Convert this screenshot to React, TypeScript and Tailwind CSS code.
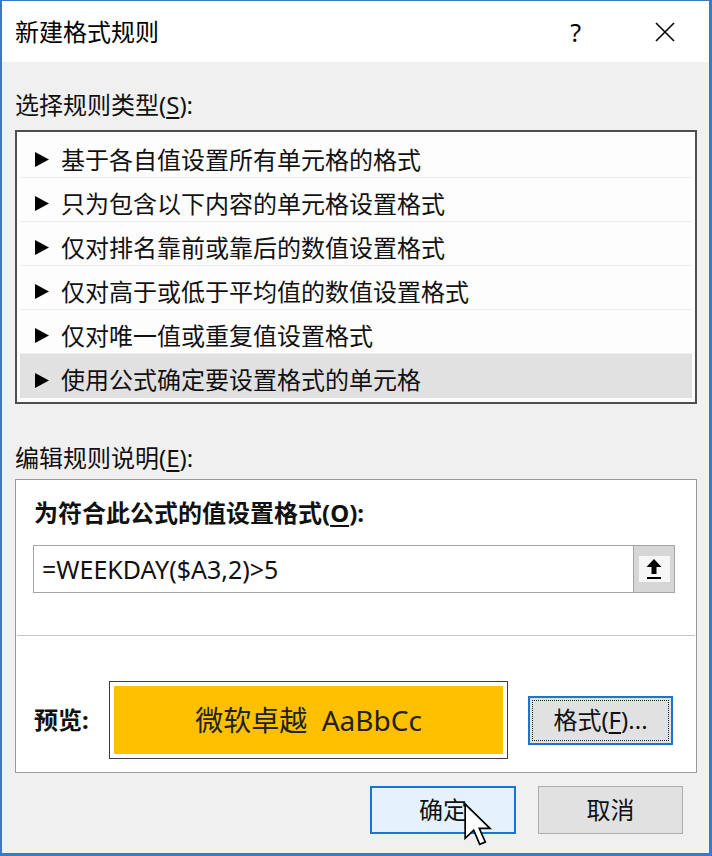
import React from "react";

const rules = [
  "基于各自值设置所有单元格的格式",
  "只为包含以下内容的单元格设置格式",
  "仅对排名靠前或靠后的数值设置格式",
  "仅对高于或低于平均值的数值设置格式",
  "仅对唯一值或重复值设置格式",
  "使用公式确定要设置格式的单元格",
];

function Tri() {
  return (
    <svg width="14" height="15" viewBox="0 0 14 15" className="ml-[15px] shrink-0">
      <polygon points="0,0 14,7.5 0,15" fill="#000" />
    </svg>
  );
}

export default function App() {
  return (
    <div className="relative w-[712px] h-[856px] flex flex-col bg-[#f0f0f0] border-t border-l-2 border-r-[3px] border-b-[3px] border-[#3a78c9] text-[#111] font-['Noto_Sans','Noto_Sans_CJK_SC',sans-serif] overflow-hidden">
      {/* Title bar */}
      <div className="h-[61px] bg-white flex items-center pl-[13px] pr-[34px] shrink-0">
        <div className="flex-1 text-[24px] leading-[24px] text-black">新建格式规则</div>
        <div className="text-[25px] leading-[24px] text-black mr-[74px]">?</div>
        <svg width="20" height="20" viewBox="0 0 20 20">
          <line x1="1" y1="1" x2="19" y2="19" stroke="#000" strokeWidth="1.6" />
          <line x1="19" y1="1" x2="1" y2="19" stroke="#000" strokeWidth="1.6" />
        </svg>
      </div>

      {/* Body */}
      <div className="flex-1 flex flex-col pl-[13px] pr-[12px]">
        <div className="mt-[31px] text-[24px] leading-[24px]">
          选择规则类型(<span className="underline underline-offset-[3px]">S</span>):
        </div>

        {/* List */}
        <div className="mt-[13px] border-2 border-[#4e4e4e] bg-[#fdfdfd] pt-[2px] pb-[4px]">
          {rules.map((t, i) => (
            <div
              key={i}
              className={`flex items-center h-[44px] pt-[8px] mx-[3px] ${i < 5 ? "border-b border-[#eeeeee]" : ""} ${i === 5 ? "bg-[#e1e1e2]" : ""}`}
            >
              <Tri />
              <span className="ml-[12px] text-[24px] leading-[24px] whitespace-nowrap">{t}</span>
            </div>
          ))}
        </div>

        <div className="mt-[42px] text-[24px] leading-[24px]">
          编辑规则说明(<span className="underline underline-offset-[3px]">E</span>):
        </div>

        {/* Panel */}
        <div className="mt-[9px] border border-[#9a9a9a] bg-white pb-[13px]">
          <div className="mt-[21px] pl-[18px] text-[24px] leading-[24px] font-bold">
            为符合此公式的值设置格式(<span className="underline underline-offset-[3px]">O</span>):
          </div>
          <div className="ml-[17px] mr-[21px] mt-[20px] h-[48px] flex border border-[#a5a5a5] bg-white">
            <div className="flex-1 flex items-center pl-[8px] text-[25px] leading-[25px]">=WEEKDAY($A3,2)&gt;5</div>
            <div className="w-[41px] bg-[#d6d6d6] border-l border-[#a5a5a5] flex items-center justify-center">
              <div className="w-[31px] h-[26px] bg-[#f6f6f6] flex items-center justify-center">
                <svg width="16" height="22" viewBox="0 0 16 22">
                  <polygon points="8,1 15.5,9 10.5,9 10.5,16 5.5,16 5.5,9 0.5,9" fill="#000" />
                  <rect x="1" y="19" width="14" height="2" fill="#000" />
                </svg>
              </div>
            </div>
          </div>
          <div className="mt-[42px] mx-[1px] h-px bg-[#c6c6c6]" />
          <div className="mt-[45px] flex items-center pl-[18px]">
            <div className="w-[75px] text-[24px] leading-[24px] font-bold">预览:</div>
            <div className="w-[399px] h-[78px] border border-[#3c3c3c] p-[4px] bg-white">
              <div className="w-full h-full bg-[#ffc000] flex items-center justify-center text-[28px] leading-[28px] text-[#222]">
                微软卓越&nbsp;&nbsp;AaBbCc
              </div>
            </div>
            <div className="ml-[20px] w-[145px] h-[49px] border-2 border-[#1a73d6] bg-[#e1e1e1] p-[2px]">
              <div className="w-full h-full border border-dotted border-[#222] flex items-center justify-center text-[24px] leading-[24px]">
                格式(<span className="underline underline-offset-[3px]">F</span>)...
              </div>
            </div>
          </div>
        </div>

        {/* Buttons */}
        <div className="mt-[13px] flex justify-end gap-[22px] pr-[14px]">
          <div className="w-[146px] h-[48px] border-2 border-[#1a73d6] bg-[#e5f1fb] flex items-center justify-center text-[24px] leading-[24px]">
            确定
          </div>
          <div className="w-[145px] h-[48px] border border-[#adadad] bg-[#e1e1e1] flex items-center justify-center text-[24px] leading-[24px]">
            取消
          </div>
        </div>
      </div>

      {/* Mouse cursor */}
      <svg
        className="absolute left-[461px] top-[801px]"
        width="30"
        height="46"
        viewBox="0 0 14 21.5"
      >
        <path
          d="M1 1 L1 17 L5 13.2 L7.8 19.8 L10.4 18.7 L7.6 12.3 L12.6 12.3 Z"
          fill="#fff"
          stroke="#000"
          strokeWidth="0.8"
          strokeLinejoin="miter"
        />
      </svg>
    </div>
  );
}
